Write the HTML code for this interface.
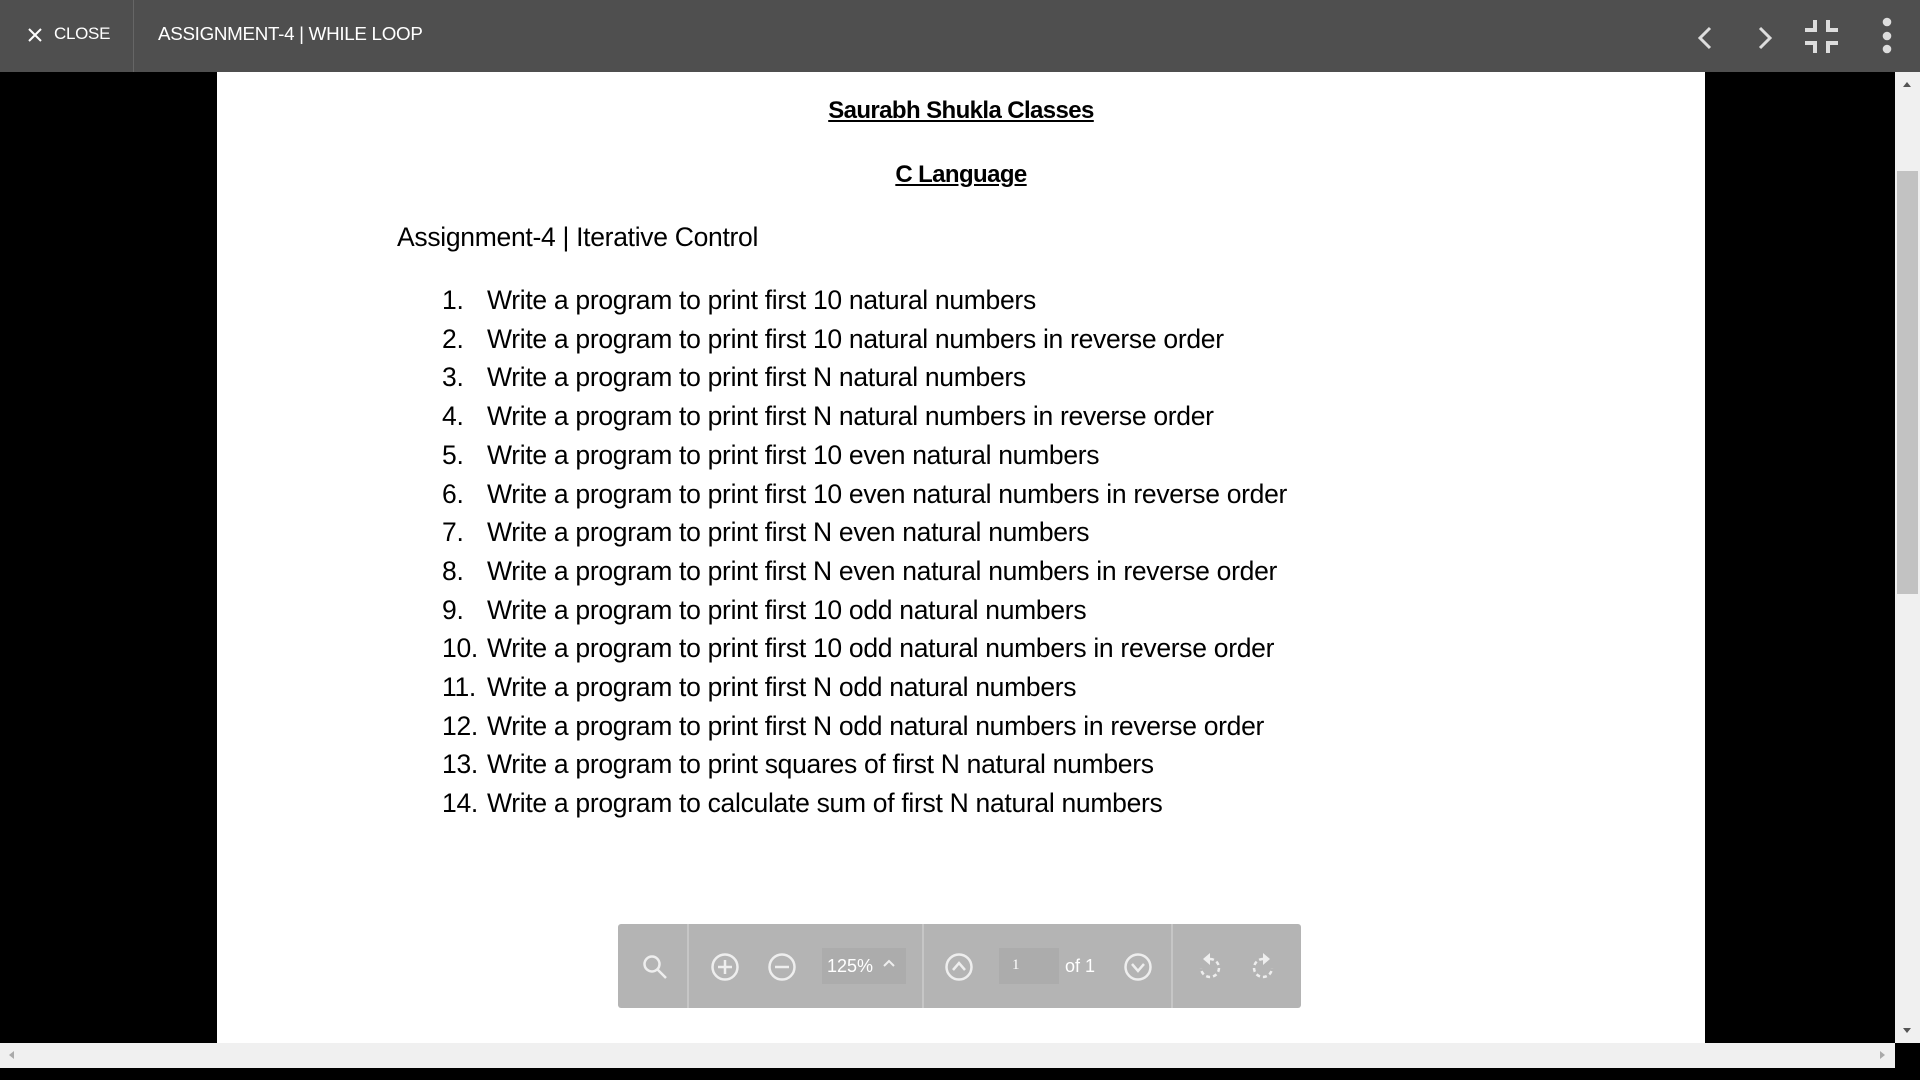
<!DOCTYPE html>
<html><head><meta charset="utf-8"><style>
*{margin:0;padding:0;box-sizing:border-box}
body{width:1920px;height:1080px;background:#000;position:relative;overflow:hidden;font-family:"Liberation Sans",sans-serif}
.top{position:absolute;left:0;top:0;width:1920px;height:72px;background:#4f4f4f;color:#fff}
.top .t{position:absolute;top:24px;font-size:17px;letter-spacing:-0.3px}
.div{position:absolute;left:133px;top:0;width:1px;height:72px;background:#666}
.page{position:absolute;left:217px;top:72px;width:1488px;height:971px;background:#fff;color:#000}
.h{position:absolute;left:0;width:100%;text-align:center;font-weight:bold;text-decoration:underline;font-size:24px;letter-spacing:-0.6px}
.p{position:absolute;font-size:26.5px;letter-spacing:-0.3px;white-space:nowrap}
.vs{position:absolute;left:1895px;top:72px;width:25px;height:971px;background:#f0f0f0}
.hs{position:absolute;left:0;top:1043px;width:1895px;height:25px;background:#f0f0f0}
.tb{position:absolute;left:618px;top:924px;width:683px;height:84px;background:#b4b4b4;border-radius:3px}
.tb .d{position:absolute;top:0;width:2px;height:84px;background:#c6c6c6}
.tb .bx{position:absolute;background:#acacac}
.tb .tx{position:absolute;color:#fff;font-size:18px}
</style></head><body>
<div class="top">
<svg style="position:absolute;left:28px;top:28px" width="14" height="14"><path d="M1 1L13 13M13 1L1 13" stroke="#fff" stroke-width="2"/></svg>
<div class="t" style="left:54px">CLOSE</div>
<div class="div"></div>
<div class="t" style="left:158px;font-size:18.8px;top:23px">ASSIGNMENT-4 | WHILE LOOP</div>
<svg style="position:absolute;left:1696px;top:26px" width="18" height="24"><path d="M14 2L4 12L14 22" stroke="#ddd" stroke-width="3" fill="none"/></svg>
<svg style="position:absolute;left:1756px;top:26px" width="18" height="24"><path d="M4 2L14 12L4 22" stroke="#ddd" stroke-width="3" fill="none"/></svg>
<svg style="position:absolute;left:1805px;top:20px" width="33" height="33" fill="#ddd"><path d="M8 0h4v12H0V8h8zM21 0h4v8h8v4H21zM0 21h12v12H8v-8H0zM21 21h12v4h-8v8h-4z"/></svg>
<svg style="position:absolute;left:1880px;top:16px" width="14" height="40" fill="#ddd"><circle cx="7" cy="6" r="4.3"/><circle cx="7" cy="20" r="4.3"/><circle cx="7" cy="33" r="4.3"/></svg>
</div>
<div class="page">
<div class="h" style="top:25px;left:0">Saurabh Shukla Classes</div>
<div class="h" style="top:89px;left:0">C Language</div>
<div class="p" style="left:180px;top:150px">Assignment-4 | Iterative Control</div>
<div class="p" style="left:225px;top:209px;line-height:38.7px">1.<br>2.<br>3.<br>4.<br>5.<br>6.<br>7.<br>8.<br>9.<br>10.<br>11.<br>12.<br>13.<br>14.</div>
<div class="p" style="left:270px;top:209px;line-height:38.7px">Write a program to print first 10 natural numbers<br>Write a program to print first 10 natural numbers in reverse order<br>Write a program to print first N natural numbers<br>Write a program to print first N natural numbers in reverse order<br>Write a program to print first 10 even natural numbers<br>Write a program to print first 10 even natural numbers in reverse order<br>Write a program to print first N even natural numbers<br>Write a program to print first N even natural numbers in reverse order<br>Write a program to print first 10 odd natural numbers<br>Write a program to print first 10 odd natural numbers in reverse order<br>Write a program to print first N odd natural numbers<br>Write a program to print first N odd natural numbers in reverse order<br>Write a program to print squares of first N natural numbers<br>Write a program to calculate sum of first N natural numbers</div>
</div>
<div class="vs"><div style="position:absolute;left:2px;top:99px;width:21px;height:423px;background:#c2c2c2"></div>
<div style="position:absolute;left:8px;top:10px;border:4px solid transparent;border-bottom:5px solid #555;border-top:0"></div>
<div style="position:absolute;left:8px;top:956px;border:4px solid transparent;border-top:5px solid #555;border-bottom:0"></div></div>
<div class="hs"><div style="position:absolute;left:9px;top:8px;border:4px solid transparent;border-right:5px solid #aaa;border-left:0"></div>
<div style="position:absolute;left:1880px;top:8px;border:4px solid transparent;border-left:5px solid #aaa;border-right:0"></div></div>
<div class="tb">
<div class="d" style="left:69px"></div><div class="d" style="left:304px"></div><div class="d" style="left:553px"></div>
<svg style="position:absolute;left:24px;top:30px" width="26" height="26" stroke="#eee" stroke-width="2.5" fill="none"><circle cx="10" cy="10" r="7.5"/><path d="M15.5 15.5L24 24"/></svg>
<svg style="position:absolute;left:92px;top:28px" width="30" height="30" stroke="#eee" stroke-width="2.5" fill="none"><circle cx="15" cy="15" r="12.5"/><path d="M15 8v14M8 15h14"/></svg>
<svg style="position:absolute;left:149px;top:28px" width="30" height="30" stroke="#eee" stroke-width="2.5" fill="none"><circle cx="15" cy="15" r="12.5"/><path d="M8 15h14"/></svg>
<div class="bx" style="left:204px;top:24px;width:84px;height:36px"></div>
<div class="tx" style="left:209px;top:32px">125%</div>
<svg style="position:absolute;left:264px;top:34px" width="14" height="10" stroke="#eee" stroke-width="2" fill="none"><path d="M2 8L7 3L12 8"/></svg>
<svg style="position:absolute;left:326px;top:28px" width="30" height="30" stroke="#eee" stroke-width="2.5" fill="none"><circle cx="15" cy="15" r="12.5"/><path d="M9 18L15 11L21 18"/></svg>
<div class="bx" style="left:381px;top:24px;width:60px;height:36px"></div>
<div class="tx" style="left:394px;top:33px;font-family:'Liberation Serif',serif;font-size:15px">1</div>
<div class="tx" style="left:447px;top:32px">of 1</div>
<svg style="position:absolute;left:505px;top:28px" width="30" height="30" stroke="#eee" stroke-width="2.5" fill="none"><circle cx="15" cy="15" r="12.5"/><path d="M9 12L15 19L21 12"/></svg>
<svg style="position:absolute;left:575px;top:27px" width="30" height="32" stroke="#eee" stroke-width="2.5" fill="none"><path d="M17 8a9 9 0 1 1-9 9" stroke-dasharray="4 3"/><path d="M17 2v12l-7-6z" fill="#eee" stroke="none"/></svg>
<svg style="position:absolute;left:632px;top:27px" width="30" height="32" stroke="#eee" stroke-width="2.5" fill="none"><path d="M13 8a9 9 0 1 0 9 9" stroke-dasharray="4 3"/><path d="M13 2v12l7-6z" fill="#eee" stroke="none"/></svg>
</div>
</body></html>
